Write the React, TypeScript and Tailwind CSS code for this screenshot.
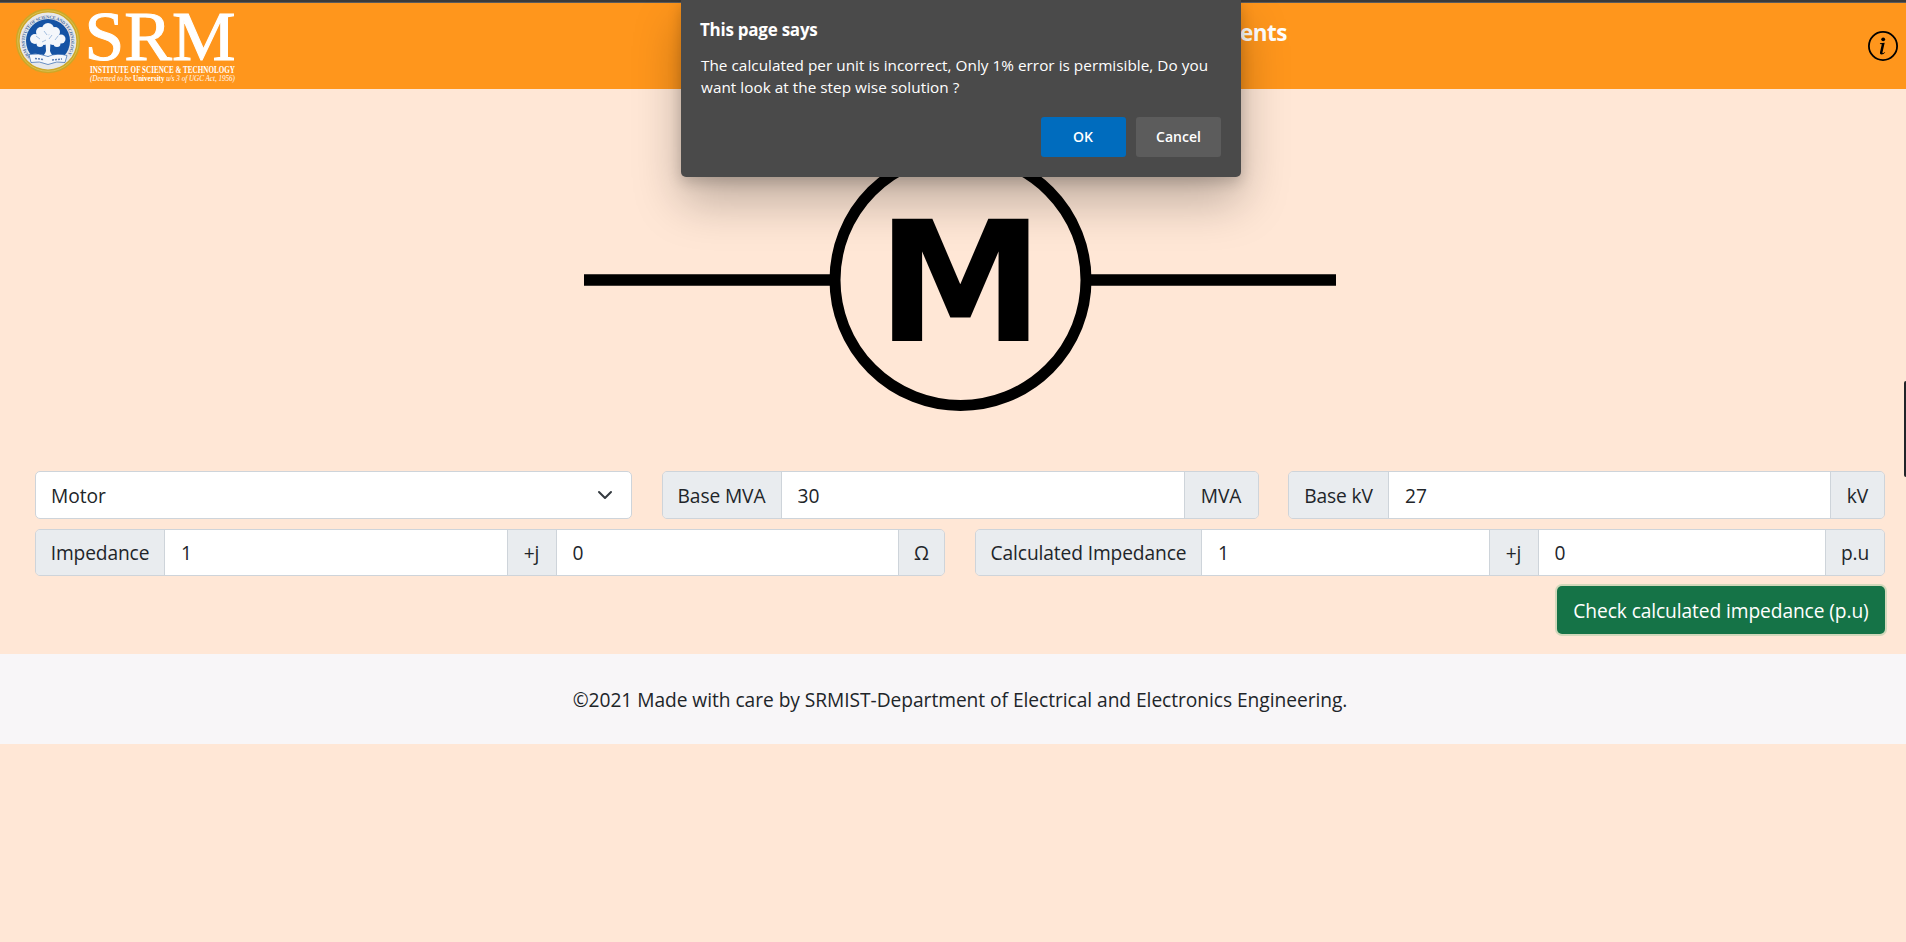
import type { ReactNode } from 'react';

const Addon = ({ children, className = '' }: { children: ReactNode; className?: string }) => (
  <span className={`flex shrink-0 items-center justify-center bg-[#e9ecef] pt-[2px] tracking-[-0.120px] ${className}`}>{children}</span>
);

const Field = ({ value }: { value: string }) => (
  <input
    defaultValue={value}
    className="min-w-0 flex-1 border-x border-[#ced4da] bg-white pl-4 pr-[15px] pt-[2px] outline-none"
  />
);

const Group = ({ children, className = '' }: { children: ReactNode; className?: string }) => (
  <div className={`flex overflow-hidden rounded-[5px] border border-[#ced4da] ${className}`}>{children}</div>
);

const Seal = () => (
  <svg className="ml-[15px] mr-px mt-[8px] size-[66px] shrink-0" viewBox="0 0 66 66">
    <defs>
      <path id="ring" d="M15.500 49 A23.200 23.200 0 1 1 50.500 49" />
    </defs>
    <circle cx="33" cy="33" r="30.300" fill="#e6e8ea" stroke="#cda727" strokeWidth="3.800" />
    <circle cx="33" cy="33" r="30.300" fill="none" stroke="#dcc45c" strokeWidth=".8" />
    <circle cx="33" cy="33" r="22" fill="#1553a4" />
    <text fontFamily="Liberation Serif" fontWeight="700" fontSize="4.600" fill="#4a6da3" letterSpacing="0">
      <textPath href="#ring" textLength="102">SRM INSTITUTE OF SCIENCE AND TECHNOLOGY</textPath>
    </text>
    <g fill="#f4f7fb">
      <circle cx="33" cy="21" r="6" />
      <circle cx="26" cy="24" r="5" />
      <circle cx="40" cy="24" r="5" />
      <circle cx="20" cy="31" r="5" />
      <circle cx="29" cy="31" r="6" />
      <circle cx="38" cy="31" r="6" />
      <circle cx="46" cy="31" r="4.500" />
      <circle cx="25" cy="35.500" r="3.500" />
      <circle cx="42" cy="35.500" r="3.500" />
      <path d="M30.500 34h5l-.5 9q1 4 5 5.500H26q4-1.500 5-5.500z" />
      <path d="M14 46.500q10-2 19 2q9-4 19-1l-2 7q-8-2-17 2q-9-4-17-2z" stroke="#1553a4" strokeWidth=".6" />
    </g>
    <path d="M20 50.500l9 1M37 52l10-1" stroke="#5b7fb5" strokeWidth="1.500" strokeDasharray="2 1" />
    <path d="M21 28l4 3M29 23l3 4M37 27l-3 4M43 28l-3 4M27 34l4-2" stroke="#8fb0d8" strokeWidth=".8" />
  </svg>
);

const Wordmark = () => (
  <svg
    className="ml-1 mt-1 h-[84px] w-[152px] shrink-0 overflow-visible"
    viewBox="86 4 152 84"
    fill="#fff"
    fontFamily="Liberation Serif, serif"
    letterSpacing="0"
  >
    <text x="84.500" y="60" fontSize="70" stroke="#fff" strokeWidth="1" textLength="151" lengthAdjust="spacingAndGlyphs">SRM</text>
    <text x="90" y="72.500" fontSize="9.500" fontWeight="700" textLength="145" lengthAdjust="spacingAndGlyphs">INSTITUTE OF SCIENCE &amp; TECHNOLOGY</text>
    <text x="90" y="81" fontSize="8" fontStyle="italic" textLength="145" lengthAdjust="spacingAndGlyphs">
      (Deemed to be <tspan fontStyle="normal" fontWeight="700">University</tspan> u/s 3 of UGC Act, 1956)
    </text>
  </svg>
);

export default function App() {
  return (
    <div className="relative flex h-[942px] w-full flex-col overflow-hidden bg-[#ffe7d6] font-['Open_Sans',sans-serif] text-[19.200px] tracking-[-0.050px] text-[#212529]">
      <div className="h-[3px] shrink-0 border-b border-[#5b5b5b] bg-[#3b3b3b]" />
      <header className="flex h-[86px] shrink-0 bg-[#ff961c]">
        <div className="-mt-[3px] flex">
          <Seal />
          <Wordmark />
        </div>
        <h1 className="ml-auto pt-[14px] text-[22.500px] font-bold leading-[32px] tracking-[-0.5px] text-white">ents</h1>
        <svg className="ml-[581px] mr-[8px] mt-[28px] size-[30px] shrink-0" viewBox="0 0 30 30" fill="#000">
          <circle cx="15" cy="15" r="14.100" fill="none" stroke="#000" strokeWidth="1.800" />
          <circle cx="15.200" cy="8.300" r="1.900" />
          <path d="M12 12.300L16.700 11.700L14.500 21.300Q14.400 22.300 15.200 22.100Q16 21.900 16.700 20.900L17.200 21.200Q15.700 23.600 13.500 23.600Q11.500 23.500 12 21.300L13.800 13.300L11.900 13Z" />
        </svg>
      </header>

      <div className="flex h-[382px] shrink-0 pl-[584px] pt-[60px]">
        <svg width="753" height="263" viewBox="584 149 753 263">
          <path d="M584 280H835M1086 280H1336" stroke="#000" strokeWidth="11.400" />
          <circle cx="960.500" cy="280" r="125.500" fill="none" stroke="#000" strokeWidth="11" />
          <text x="960.400" y="341.300" textAnchor="middle" fontFamily="DejaVu Sans" fontWeight="700" fontSize="168" letterSpacing="0">M</text>
        </svg>
      </div>

      <main className="flex shrink-0 flex-col pl-[35px] pr-[21px]">
        <div className="flex h-[48px] justify-between">
          <div className="flex w-[597px] items-center justify-between rounded-[5px] border border-[#ced4da] bg-white pl-[15px] pr-[18px]">
            <span className="pt-[2px]">Motor</span>
            <svg width="16" height="16" viewBox="0 0 16 16" fill="none" stroke="#343a40" strokeWidth="2" strokeLinecap="round" strokeLinejoin="round">
              <path d="m2 5 6 6 6-6" />
            </svg>
          </div>
          <Group className="w-[597px]">
            <Addon className="w-[118px]">Base MVA</Addon>
            <Field value="30" />
            <Addon className="w-[73px]">MVA</Addon>
          </Group>
          <Group className="w-[597px]">
            <Addon className="w-[99px]">Base kV</Addon>
            <Field value="27" />
            <Addon className="w-[53px]">kV</Addon>
          </Group>
        </div>
        <div className="mt-[10px] flex h-[47px] justify-between">
          <Group className="w-[910px]">
            <Addon className="w-[128px]">Impedance</Addon>
            <Field value="1" />
            <Addon className="w-[48px]">+j</Addon>
            <Field value="0" />
            <Addon className="w-[45px]">Ω</Addon>
          </Group>
          <Group className="w-[910px]">
            <Addon className="w-[225px]">Calculated Impedance</Addon>
            <Field value="1" />
            <Addon className="w-[48px]">+j</Addon>
            <Field value="0" />
            <Addon className="w-[58px]">p.u</Addon>
          </Group>
        </div>
        <button className="mt-[10px] h-[48px] w-[328px] self-end whitespace-nowrap rounded-[5px] bg-[#157347] pt-[2px] tracking-[-0.100px] text-white shadow-[0_0_0_2px_#d2d8bb]">
          Check calculated impedance (p.u)
        </button>
      </main>

      <footer className="mt-[20px] flex h-[90px] shrink-0 items-center justify-center bg-[#f8f6f8] pl-[14px] pt-[2px]">
        ©2021 Made with care by SRMIST-Department of Electrical and Electronics Engineering.
      </footer>

      <div className="absolute right-0 top-[381px] h-[96px] w-[2px] rounded-l bg-[#212529]" />

      <div
        role="dialog"
        className="absolute left-[681px] top-0 flex h-[177px] w-[560px] flex-col rounded-b-[5px] bg-[#4a4a4a] px-5 pt-[18px] text-[15.300px] tracking-[0.030px] text-white shadow-[0_24px_48px_rgba(0,0,0,0.26),0_5px_14px_rgba(0,0,0,0.18)]"
      >
        <h2 className="-ml-px whitespace-nowrap text-[17px] font-bold leading-6 tracking-[-0.250px]">This page says</h2>
        <p className="mt-[12px] whitespace-nowrap leading-[22px]">
          The calculated per unit is incorrect, Only 1% error is permisible, Do you
          <br />
          want look at the step wise solution ?
        </p>
        <div className="mt-[19px] flex justify-end gap-[10px] text-[14px] font-semibold">
          <button className="h-10 w-[85px] rounded-[3px] bg-[#006cbe] pb-px pr-px">OK</button>
          <button className="h-10 w-[85px] rounded-[3px] bg-[#5c5c5c] pb-px">Cancel</button>
        </div>
      </div>
    </div>
  );
}
